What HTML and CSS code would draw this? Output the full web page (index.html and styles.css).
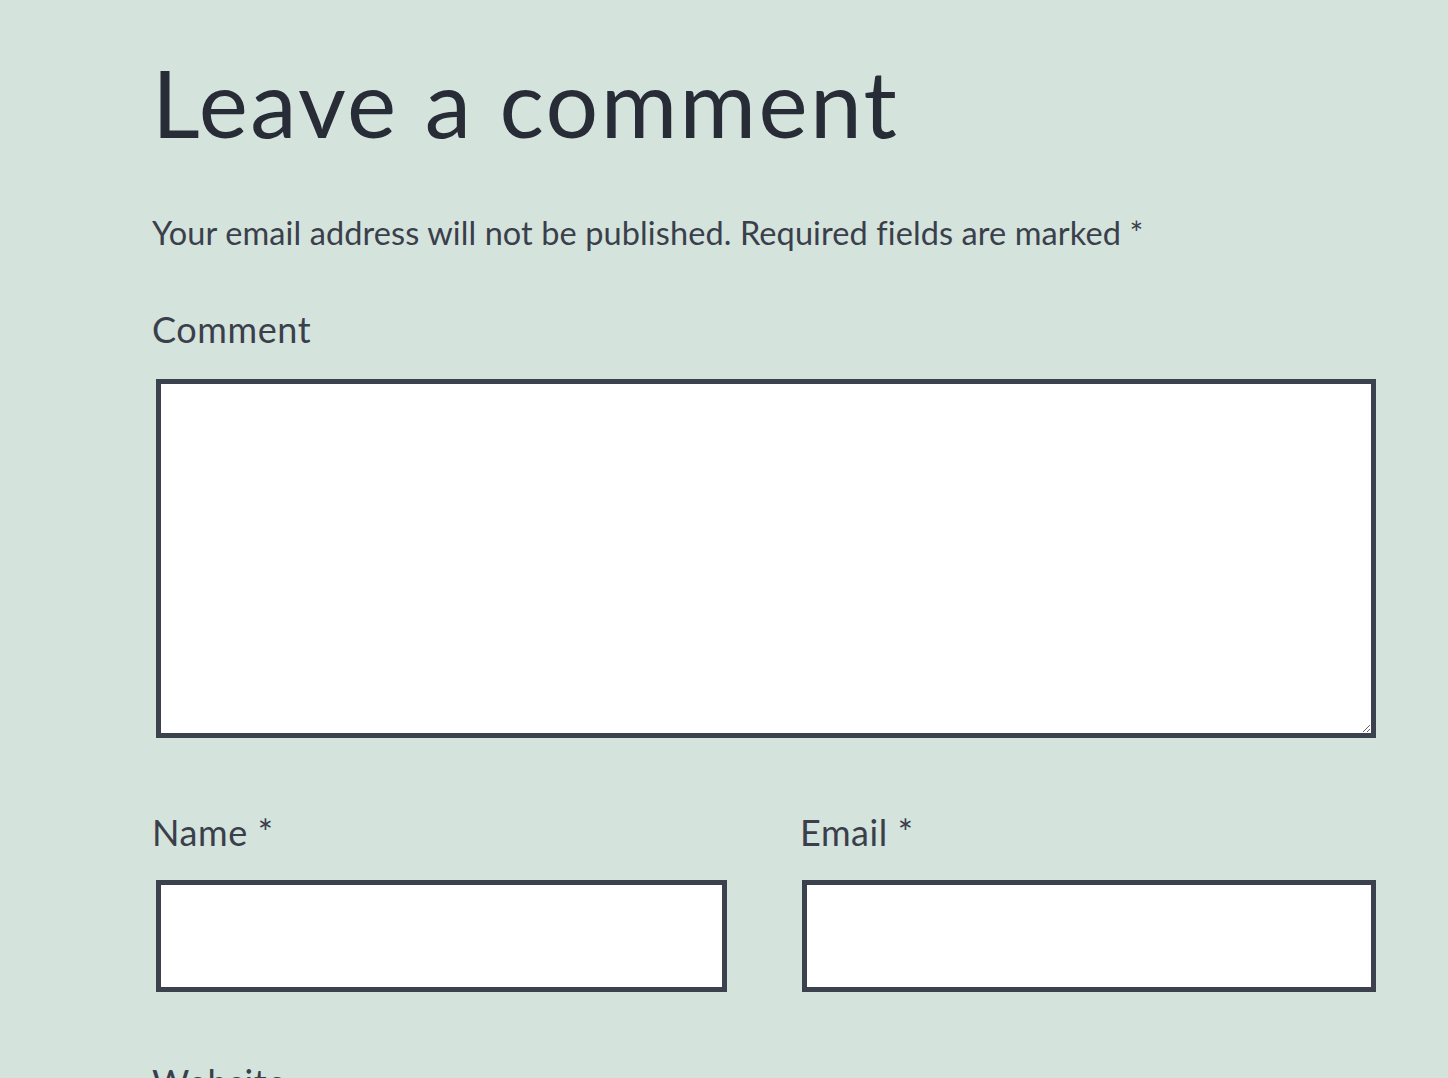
FILE: index.html
```html
<!DOCTYPE html>
<html lang="en">
<head>
<meta charset="utf-8">
<title>Leave a comment</title>
<link rel="stylesheet" href="styles.css">
</head>
<body>
<main class="comments">
  <h2 class="title">Leave a comment</h2>
  <p class="notes">Your email address will not be published. Required fields are marked *</p>
  <div class="field">
    <label class="label" for="comment">Comment</label>
    <textarea id="comment" class="textarea"></textarea>
  </div>
  <div class="row">
    <div class="field">
      <label class="label" for="name">Name *</label>
      <input id="name" class="input" type="text">
    </div>
    <div class="field">
      <label class="label" for="email">Email *</label>
      <input id="email" class="input input-right" type="email">
    </div>
  </div>
  <div class="field">
    <label class="label label-website" for="url">Website</label>
  </div>
</main>
</body>
</html>
```
FILE: styles.css
```css
html, body {
  margin: 0;
  padding: 0;
  background: #d4e3dc;
  height: 100%;
  overflow: hidden;
}
.comments {
  padding: 47px 72px 0 152px;
  font-family: "Lato", "Noto Sans", sans-serif;
  color: #3a3f4b;
}
.title {
  margin: 0;
  font-weight: 400;
  font-size: 93px;
  line-height: 110px;
  color: #272c36;
  letter-spacing: 2.4px;
}
.notes {
  margin: 56px 0 0;
  font-size: 32.5px;
  line-height: 40px;
  letter-spacing: 0.1px;
}
.field {
  display: flex;
  flex-direction: column;
}
.label {
  margin-top: 56px;
  font-size: 36px;
  line-height: 40px;
  letter-spacing: 0.6px;
}
.textarea {
  margin: 30px 0 0 4px;
  box-sizing: border-box;
  height: 359px;
  border: 5px solid #3b414d;
  background: #fff;
  resize: vertical;
}
.row {
  display: grid;
  grid-template-columns: 575px 576px;
  column-gap: 73px;
  margin-top: 18px;
}
.row .label {
  margin-top: 56px;
}
.input {
  margin: 28px 0 0 4px;
  box-sizing: border-box;
  height: 112px;
  border: 5px solid #3b414d;
  background: #fff;
}
.input-right {
  margin-left: 2px;
}
.label-website {
  margin-top: 70px;
}
```
